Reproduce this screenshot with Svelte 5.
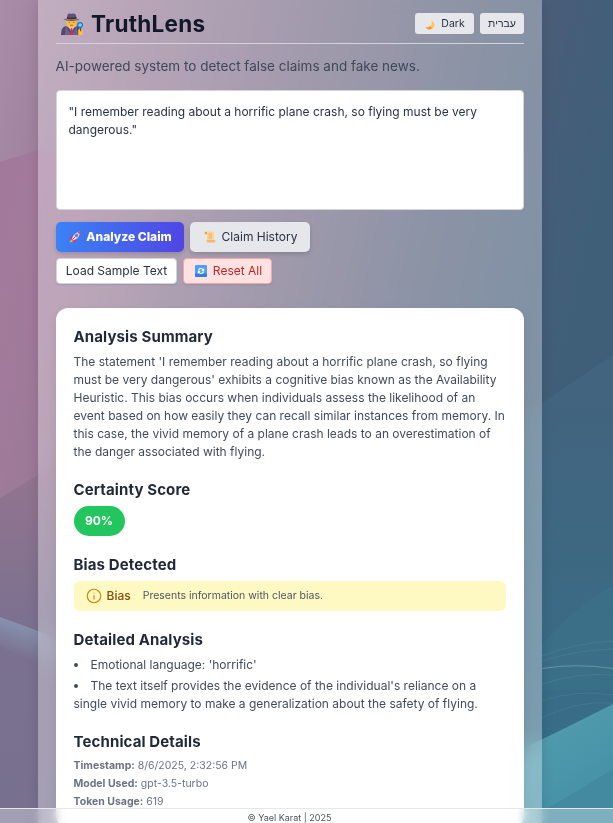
<script>
  const meta = [
    ['Timestamp:', '8/6/2025, 2:32:56 PM'],
    ['Model Used:', 'gpt-3.5-turbo'],
    ['Token Usage:', '619']
  ];
  const findings = [
    "Emotional language: 'horrific'",
    "The text itself provides the evidence of the individual's reliance on a single vivid memory to make a generalization about the safety of flying."
  ];
  let claim = $state('"I remember reading about a horrific plane crash, so flying must be very dangerous."');
</script>

<div class="page">
  <svg class="backdrop" viewBox="0 0 613 823" preserveAspectRatio="none" aria-hidden="true">
    <defs>
      <linearGradient id="base" x1="0" y1="0" x2="613" y2="130" gradientUnits="userSpaceOnUse">
        <stop offset="0" stop-color="#a98ca7" />
        <stop offset=".2" stop-color="#977b96" />
        <stop offset=".5" stop-color="#746984" />
        <stop offset=".75" stop-color="#535f7a" />
        <stop offset=".88" stop-color="#485d79" />
        <stop offset="1" stop-color="#3f5f78" />
      </linearGradient>
      <linearGradient id="rose" x1="0" y1="150" x2="190" y2="200" gradientUnits="userSpaceOnUse">
        <stop offset="0" stop-color="#a3789a" />
        <stop offset="1" stop-color="#a3789a" stop-opacity="0" />
      </linearGradient>
      <linearGradient id="violet" x1="0" y1="480" x2="0" y2="823" gradientUnits="userSpaceOnUse">
        <stop offset="0" stop-color="#92748f" />
        <stop offset=".4" stop-color="#7c718f" />
        <stop offset="1" stop-color="#77708f" />
      </linearGradient>
      <linearGradient id="streak" x1="16" y1="622" x2="6" y2="652" gradientUnits="userSpaceOnUse">
        <stop offset="0" stop-color="#8592ae" />
        <stop offset="1" stop-color="#8592ae" stop-opacity="0" />
      </linearGradient>
      <linearGradient id="teal" x1="500" y1="650" x2="613" y2="823" gradientUnits="userSpaceOnUse">
        <stop offset="0" stop-color="#59a8b6" />
        <stop offset="1" stop-color="#438ca2" />
      </linearGradient>
      <linearGradient id="sea" x1="0" y1="400" x2="0" y2="740" gradientUnits="userSpaceOnUse">
        <stop offset="0" stop-color="#42647e" />
        <stop offset="1" stop-color="#386d88" />
      </linearGradient>
    </defs>
    <rect width="613" height="823" fill="url(#base)" />
    <path d="M0 162 L38 150 L190 100 V520 L0 520Z" fill="url(#rose)" />
    <path d="M0 498 L38 475 L280 350 V823 H0Z" fill="url(#violet)" />
    <path d="M0 617 L38 631 L80 650 V700 L38 670 L0 645Z" fill="url(#streak)" />
    <path d="M330 510 L542 403 L613 355 V823 H330Z" fill="url(#sea)" />
    <path d="M542 645 Q570 610 613 585 V690 H542Z" fill="#3b7188" opacity=".65" />
    <path d="M480 769 Q540 741 613 704 V823 H440Z" fill="url(#teal)" />
    <path d="M548 808 Q580 790 613 769 V823 H548Z" fill="#4389a0" />
    <g fill="none" stroke="#6da1b2" stroke-width="1" opacity=".2">
      <path d="M542 656 Q575 643 613 641" />
      <path d="M542 661 Q577 650 613 649" />
      <path d="M542 684 Q578 672 613 675" />
      <path d="M542 701 Q577 689 613 695" />
      <path d="M542 718 Q577 700 613 703" />
    </g>
    <path d="M542 668.500 Q575 663 613 668.500" fill="none" stroke="#83aebb" opacity=".6" />
  </svg>

  <main class="panel">
    <header>
      <h1>
        <svg class="detective" viewBox="0 0 24 24" aria-hidden="true">
          <path d="M1 23 Q1 14.500 6 13.500 L12 17 L18 13.500 Q21.500 15 21.500 23Z" fill="#51486b" />
          <path d="M6 13.500 L11.500 23 H5Z M17 13.500 L12.500 23 H19Z" fill="#6e6384" />
          <path d="M8.500 13.500 H15.500 L12 20Z" fill="#d5c8df" />
          <path d="M11.200 16 H12.800 L13.700 23 H10.300Z" fill="#c92f63" />
          <path d="M7 6 H17 V11 Q16.500 15 12 15.500 Q7.500 15 7 11Z" fill="#ffbd32" />
          <path d="M9 9.800 H10.300 M13.700 9.800 H15 M10.500 12.800 H13.500" stroke="#9a562f" stroke-width=".9" />
          <path d="M7 6 L8 1.500 Q9 0 12 .8 Q15.500 -.2 16.500 2 L17.500 6Z" fill="#5b5275" />
          <path d="M7.300 4.300 Q12 5.500 17 4.300 V6 Q12 7.400 7 6Z" fill="#382d4b" />
          <path d="M3.500 6 Q12 8 20.500 6 Q19.500 8 12 8.400 Q4.500 8 3.500 6Z" fill="#5b5176" />
          <path d="M19 17.500 Q21 16 23.500 17.500 V23 H19Z" fill="#ffc13d" />
          <path d="M21.500 15 V19" stroke="#5c4b38" stroke-width="1.200" />
          <circle cx="21" cy="12.500" r="2.500" fill="#72d2fa" stroke="#1877c6" stroke-width="1.200" />
        </svg>
        <span>TruthLens</span>
      </h1>
      <nav>
        <button class="mini">
          <svg class="e10" viewBox="0 0 20 20" aria-hidden="true">
            <path d="M13 1 Q20 5 19 12 Q16 19 8 19 Q3 18 1 14 Q7 15 10 12 Q15 8 13 1Z" fill="#ffc852" />
            <path d="M1 14 Q6 16 10 13 L14 15 L12 18 Q6 21 1 14Z" fill="#f28a5a" />
          </svg>
          Dark
        </button>
        <button class="mini hebrew">עברית</button>
      </nav>
    </header>

    <p class="lead">AI-powered system to detect false claims and fake news.</p>
    <textarea bind:value={claim} spellcheck="false"></textarea>

    <div class="actions">
      <button class="big primary">
        <svg class="e12" viewBox="0 0 24 24" aria-hidden="true">
          <path d="M8 9 L2 12 L1 17 L8 15Z M15 16 L13 22 L8 23 L9 17Z" fill="#e62f61" />
          <path d="M6 15 Q9 4 22 1 Q22 14 9 19Z" fill="#d9d9e5" />
          <path d="M17 2.500 Q19 1 23 1 Q23 5 21 7Z" fill="#ed4269" />
          <circle cx="15" cy="9" r="2.700" fill="#4b89bd" stroke="#706980" />
          <path d="M5 17 L8 20 L6 22 L1 23 L3 19Z" fill="#ffaf2b" />
          <path d="M8 16 L12 12" stroke="#d73960" stroke-width="2" />
        </svg>
        Analyze Claim
      </button>
      <button class="big neutral">
        <svg class="e12" viewBox="0 0 24 24" aria-hidden="true">
          <path d="M3 1 H17 Q20 1 20 5 V18 H6 V6 H2 Q0 2 3 1Z" fill="#ffd391" />
          <path d="M1.500 3 Q4 0 6 3 V6.500 H2Z" fill="#e59a5a" />
          <path d="M6 18 H22 Q24 22 20 23 H7 Q4 22 6 18Z" fill="#f4b773" />
          <path d="M9 6 H16 M9 10 H16 M9 14 H16" stroke="#e3a062" stroke-width="1.500" />
        </svg>
        Claim History
      </button>
      <button class="small sample">Load Sample Text</button>
      <button class="small reset">
        <svg class="e12" viewBox="0 0 24 24" aria-hidden="true">
          <rect width="24" height="24" rx="2" fill="#4fa0f5" />
          <path d="M0 17 H24 V22 Q24 24 22 24 H2 Q0 24 0 22Z" fill="#2f7fe0" />
          <path d="M7 11 Q8 7 12 7 Q15 7 16.500 10 M17 13 Q16 17 12 17 Q9 17 7.500 14" fill="none" stroke="#fff" stroke-width="2.400" />
          <path d="M18.500 6 V12 H12.500Z M5.500 18 V12 H11.500Z" fill="#fff" />
        </svg>
        Reset All
      </button>
    </div>

    <article class="card">
      <section>
        <h2>Analysis Summary</h2>
        <p>The statement 'I remember reading about a horrific plane crash, so flying must be very dangerous' exhibits a cognitive bias known as the Availability Heuristic. This bias occurs when individuals assess the likelihood of an event based on how easily they can recall similar instances from memory. In this case, the vivid memory of a plane crash leads to an overestimation of the danger associated with flying.</p>
      </section>
      <section>
        <h2>Certainty Score</h2>
        <div class="score">90%</div>
      </section>
      <section>
        <h2>Bias Detected</h2>
        <div class="bias">
          <svg viewBox="0 0 24 24" fill="none" stroke="#ca8a04" stroke-width="1.600" stroke-linecap="round" stroke-linejoin="round" aria-hidden="true">
            <circle cx="12" cy="12" r="9" />
            <path d="M12 11.500v4.500M12 8h.01" />
          </svg>
          <strong>Bias</strong>
          <span>Presents information with clear bias.</span>
        </div>
      </section>
      <section>
        <h2>Detailed Analysis</h2>
        <ul>
          {#each findings as item}
            <li>{item}</li>
          {/each}
        </ul>
      </section>
      <section>
        <h2 class="tight">Technical Details</h2>
        <div class="meta">
          {#each meta as [label, value]}
            <p><b>{label}</b> {value}</p>
          {/each}
        </div>
      </section>
    </article>
  </main>

  <footer>© Yael Karat | 2025</footer>
</div>

<style>
  :global(body) {
    margin: 0;
    overflow: hidden;
  }
  .page,
  .page * {
    box-sizing: border-box;
  }
  .page {
    position: relative;
    height: 823px;
    overflow: hidden;
    font: 12px/18px Inter, "Noto Sans", "DejaVu Sans", sans-serif;
    color: #1f2937;
  }
  h1, h2, p, ul { margin: 0; padding: 0; }
  .backdrop {
    position: absolute;
    inset: 0;
    width: 100%;
    height: 100%;
  }
  .panel {
    position: relative;
    width: 504px;
    height: 860px;
    margin: 0 auto 0 38px;
    padding: 9px 18px 0;
    background: rgba(255, 255, 255, .33);
    backdrop-filter: blur(12px);
    box-shadow: 0 4px 12px rgba(0, 0, 0, .12);
  }
  header {
    display: flex;
    justify-content: space-between;
    height: 35px;
    border-bottom: 1px solid #d1d5db;
  }
  h1 {
    display: flex;
    align-items: center;
    gap: 8px;
    height: 30px;
    padding-left: 4px;
    font-size: 22.5px;
    line-height: 30px;
    font-weight: 700;
    letter-spacing: .27px;
    color: #111827;
  }
  .detective { width: 23px; height: 23px; }
  nav {
    display: flex;
    gap: 6px;
    padding-top: 4px;
  }
  button {
    display: flex;
    align-items: center;
    justify-content: center;
    margin: 0;
    padding: 0;
    border: 0;
    font-family: inherit;
    color: #283241;
  }
  .mini {
    width: 59px;
    height: 21px;
    gap: 6px;
    border-radius: 3px;
    background: #e5e7eb;
    font-size: 10.500px;
  }
  .hebrew {
    width: 44px;
    font-family: Inter, "Liberation Sans", sans-serif;
  }
  .e10 { width: 10px; height: 10px; margin: 2px 0 0 1px; }
  .e12 { width: 12px; height: 12px; }
  .lead {
    margin-top: 12px;
    margin-left: -.4px;
    font-size: 13.500px;
    line-height: 21px;
    color: #3e4858;
  }
  textarea {
    display: block;
    width: 100%;
    height: 120px;
    margin-top: 13px;
    padding: 12px 12px 12px 11.500px;
    border: 1px solid #d1d5db;
    border-radius: 4px;
    resize: none;
    outline: 0;
    background: #fff;
    color: #283241;
    font: inherit;
  }
  .actions {
    display: flex;
    flex-wrap: wrap;
    gap: 6px;
    width: 280px;
    margin-top: 12px;
  }
  .big {
    height: 30px;
    padding-bottom: 1px;
    border-radius: 5px;
    gap: 6px;
    font-size: 12px;
    box-shadow: 0 2px 4px rgba(0, 0, 0, .16);
  }
  .primary {
    width: 128px;
    gap: 5px;
    padding-left: 1px;
    background: linear-gradient(90deg, #3b82f6, #4f46e5);
    color: #fff;
    font-weight: 800;
  }
  .neutral { width: 120px; padding-left: 1px; background: #e5e7eb; }
  .small {
    height: 26px;
    padding-bottom: 1px;
    border-radius: 4px;
    font-size: 12px;
    box-shadow: 0 1px 2px rgba(0, 0, 0, .1);
  }
  .sample { width: 121px; background: #fff; border: 1px solid #d1d5db; }
  .reset {
    width: 89px;
    gap: 6px;
    padding-left: 2px;
    background: #fee2e2;
    border: 1px solid #fca5a5;
    color: #bd2626;
  }
  .card {
    height: 519px;
    margin-top: 24px;
    padding: 18px 18px 18px 17.500px;
    border-radius: 12px;
    background: #fff;
    box-shadow: 0 4px 12px rgba(0, 0, 0, .08);
    color: #414b5a;
  }
  section { margin-bottom: 18px; }
  h2 {
    margin-bottom: 6px;
    font-size: 15px;
    line-height: 21px;
    font-weight: 700;
    letter-spacing: .12px;
    color: #1f2937;
  }
  .tight { margin-bottom: 5px; }
  .score {
    width: 51px;
    height: 30px;
    border-radius: 15px;
    background: #22c55e;
    color: #fff;
    font-weight: 700;
    line-height: 30px;
    text-align: center;
  }
  .bias {
    display: flex;
    align-items: center;
    height: 30px;
    padding-left: 11px;
    border-radius: 6px;
    background: #fef9c3;
  }
  .bias svg { width: 18px; height: 18px; margin-right: 4px; }
  .bias strong { margin-right: 12px; font-weight: 450; color: #854d0e; }
  .bias span { font-size: 10.500px; color: #4b5563; }
  ul { list-style: disc inside; }
  li + li { margin-top: 3px; }
  .meta { font-size: 10.500px; color: #6b7280; }
  footer {
    position: absolute;
    left: 0;
    right: 0;
    bottom: 0;
    height: 15px;
    border-top: 1px solid #e5e7eb;
    background: rgba(255, 255, 255, .32);
    backdrop-filter: blur(4px);
    color: #4b5563;
    font-size: 9px;
    line-height: 18px;
    text-align: center;
    padding-right: 34px;
  }
</style>
